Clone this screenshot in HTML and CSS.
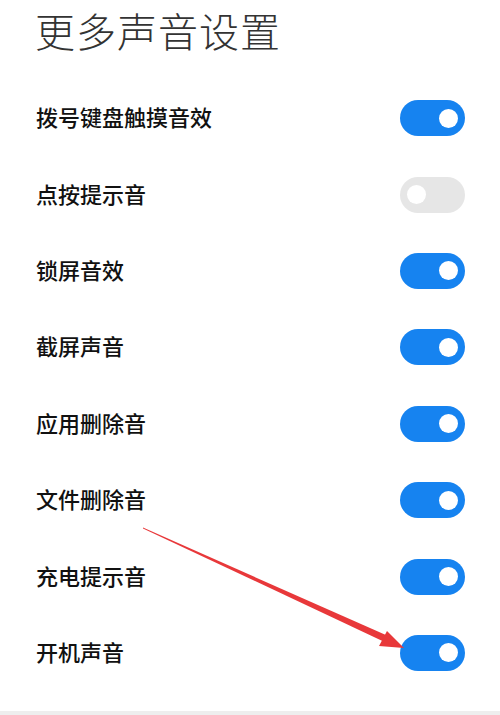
FILE: index.html
```html
<!DOCTYPE html>
<html lang="zh-CN">
<head>
    <meta charset="UTF-8">
    <meta name="viewport" content="width=device-width, initial-scale=1.0">
    <title>更多声音设置</title>
    <link rel="stylesheet" href="styles.css">
</head>
<body>
    <main class="page">
        <h1 class="title">更多声音设置</h1>
        <ul class="settings">
            <li class="row"><span class="label">拨号键盘触摸音效</span><span class="switch on"></span></li>
            <li class="row"><span class="label">点按提示音</span><span class="switch"></span></li>
            <li class="row"><span class="label">锁屏音效</span><span class="switch on"></span></li>
            <li class="row"><span class="label">截屏声音</span><span class="switch on"></span></li>
            <li class="row"><span class="label">应用删除音</span><span class="switch on"></span></li>
            <li class="row"><span class="label">文件删除音</span><span class="switch on"></span></li>
            <li class="row"><span class="label">充电提示音</span><span class="switch on"></span></li>
            <li class="row"><span class="label">开机声音</span><span class="switch on"></span></li>
        </ul>
        <div class="bottom-bar"></div>

        <!-- red annotation arrow over the screenshot -->
        <svg class="arrow" width="500" height="715" viewBox="0 0 500 715">
            <polygon points="143,527.6 387,635.5 383.5,641.5 143,528.4" fill="#e8383a"/>
            <polygon points="404,648 387,631 379,646" fill="#e8383a"/>
        </svg>
    </main>
</body>
</html>
```
FILE: styles.css
```css
body {
    margin: 0;
    background: #ffffff;
    font-family: "Noto Sans CJK SC", "Noto Sans", sans-serif;
}
.page {
    position: relative;
    width: 500px;
    height: 715px;
    overflow: hidden;
    display: flex;
    flex-direction: column;
}
.title {
    margin: -2px 0 18px;
    padding-left: 35px;
    font-size: 40px;
    line-height: 64px;
    font-weight: 300;
    color: #333333;
    letter-spacing: 1px;
}
.settings {
    list-style: none;
    margin: 0;
    padding: 0 35px 0 36px;
}
.row {
    height: 76.4px;
    display: flex;
    align-items: center;
    justify-content: space-between;
}
.label {
    padding-bottom: 4px;
    font-size: 22px;
    font-weight: 500;
    color: #111111;
}
.switch {
    position: relative;
    width: 65px;
    height: 36px;
    border-radius: 18px;
    background: #e6e6e6;
}
.switch::after {
    content: "";
    position: absolute;
    top: 8.5px;
    left: 7px;
    width: 19px;
    height: 19px;
    border-radius: 50%;
    background: #ffffff;
}
.switch.on {
    background: #1683f0;
}
.switch.on::after {
    left: auto;
    right: 7px;
}
.bottom-bar {
    margin-top: auto;
    height: 4px;
    background: #eeeeee;
}
.arrow {
    position: absolute;
    top: 0;
    left: 0;
    pointer-events: none;
}
```
